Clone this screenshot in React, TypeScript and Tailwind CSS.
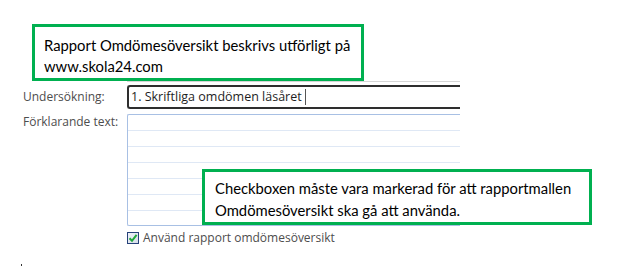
export default function App() {
  return (
    <div className="relative w-[626px] h-[266px] overflow-hidden bg-white">
      {/* form */}
      <div className="pt-[81px] text-[12px] text-[#4d4d4d]" style={{ fontFamily: '"Open Sans", "Noto Sans", sans-serif' }}>
        <div className="ml-[127px] w-[333px] h-px bg-[#d6d6d6]" />
        <div className="mt-[3px] flex items-center h-[24px]">
          <div className="w-[127px] pl-[23px] leading-[16px]">Undersökning:</div>
          <div className="w-[333px] h-[24px] border-2 border-r-0 border-[#2e2e2e] rounded-l-[3px] flex items-center pl-[2px] text-[12.5px] text-[#1e1e1e]">
            <span>1. Skriftliga omdömen läsåret</span>
            <span className="ml-[3px] w-px h-[16px] bg-[#555]" />
          </div>
        </div>
        <div className="mt-[5px] flex">
          <div className="w-[127px] pl-[23px] leading-[16px]">Förklarande text:</div>
          <div className="w-[333px] h-[112px] border border-r-0 border-[#a8c0e4] rounded-l-[2px] flex flex-col">
            <div className="h-[16px] border-b border-[#dfe8f5]" />
            <div className="h-[16px] border-b border-[#dfe8f5]" />
            <div className="h-[16px] border-b border-[#dfe8f5]" />
            <div className="h-[16px] border-b border-[#dfe8f5]" />
            <div className="h-[16px] border-b border-[#dfe8f5]" />
            <div className="h-[16px] border-b border-[#dfe8f5]" />
            <div className="flex-1" />
          </div>
        </div>
        <div className="mt-[6px] ml-[127px] flex items-center gap-[4px] h-[12px]">
          <div className="w-[12px] h-[12px] border border-[#26427a] bg-gradient-to-br from-[#eef2f8] to-[#d6dde8] flex items-center justify-center">
            <svg width="10" height="10" viewBox="0 0 10 10">
              <path d="M1.5 5.2 L4 7.8 L8.6 1.8" fill="none" stroke="#1fa83a" strokeWidth="2" />
            </svg>
          </div>
          <span className="leading-[14px]">Använd rapport omdömesöversikt</span>
        </div>
      </div>

      {/* callouts */}
      <div
        className="absolute left-[32px] top-[24px] w-[332px] h-[57px] border-[3px] border-[#00b050] bg-white pl-[9px] pt-[8px] text-[14.8px] leading-[21px] text-black"
        style={{ fontFamily: 'Lato, "Open Sans", sans-serif' }}
      >
        <div>Rapport Omdömesöversikt beskrivs utförligt på</div>
        <div>www.skola24.com</div>
      </div>
      <div
        className="absolute left-[202px] top-[169px] w-[390px] h-[56px] border-[3px] border-[#00b050] bg-white pl-[10px] pt-[5px] text-[14.8px] leading-[22px] text-black"
        style={{ fontFamily: 'Lato, "Open Sans", sans-serif' }}
      >
        <div>Checkboxen måste vara markerad för att rapportmallen</div>
        <div>Omdömesöversikt ska gå att använda.</div>
      </div>

      <div className="absolute left-[21px] top-[264px] w-px h-[2px] bg-[#333]" />
    </div>
  );
}
